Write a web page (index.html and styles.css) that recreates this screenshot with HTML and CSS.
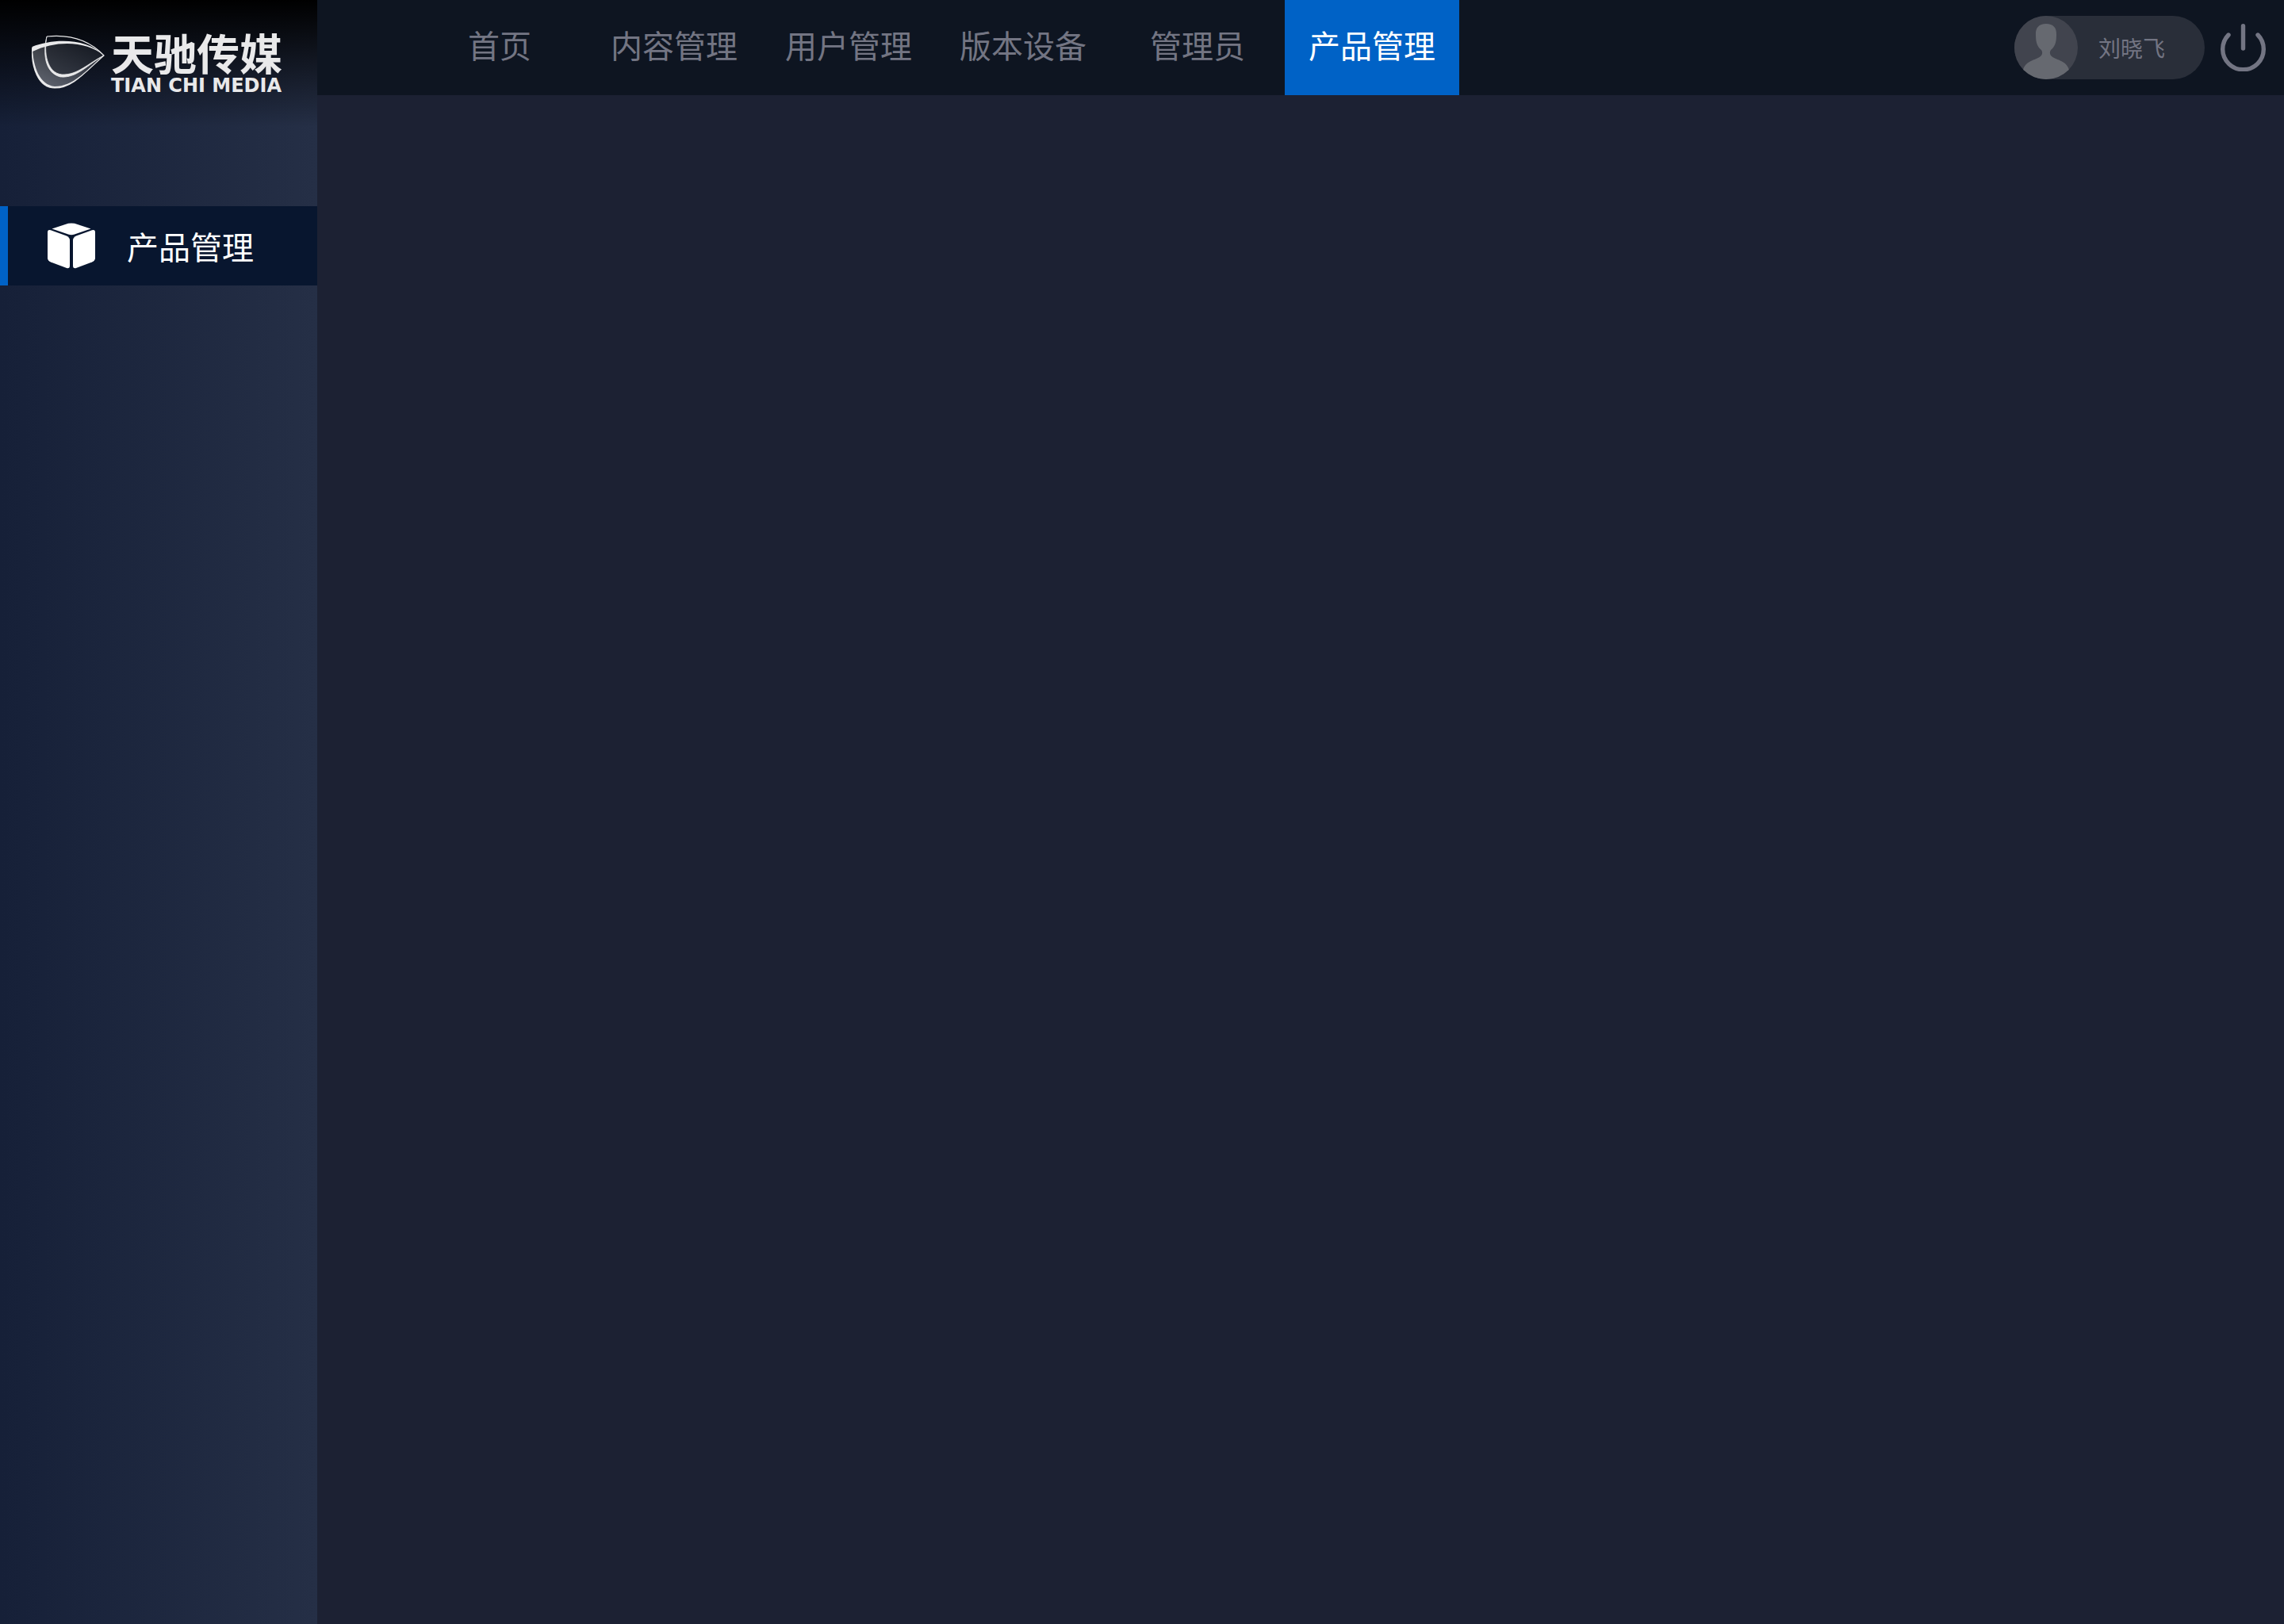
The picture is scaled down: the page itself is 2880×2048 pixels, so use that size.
FILE: index.html
```html
<!DOCTYPE html>
<html lang="zh-CN">
<head>
<meta charset="utf-8">
<meta name="viewport" content="width=device-width, initial-scale=1">
<title>产品管理</title>
<link rel="stylesheet" href="styles.css">
</head>
<body>
<div class="app">
  <aside class="sidebar">
    <div class="brand">
      <svg class="brand-mark" viewBox="0 0 92 70" aria-hidden="true">
        <defs>
          <linearGradient id="glass" x1="0" y1="1" x2="1" y2="0">
            <stop offset="0" stop-color="#fff" stop-opacity=".36"/>
            <stop offset="1" stop-color="#fff" stop-opacity=".04"/>
          </linearGradient>
        </defs>
        <path d="M.8 16C28 4 70 5 91 26C68 46 52 67 29 67C8 67-1 40 .8 16Z" fill="url(#glass)"/>
        <path d="M19 2C48-1 73 7 91 26C72 35 58 54 38 54C16 52 14 22 19 2Z" fill="#10151f" fill-opacity=".4"/>
        <path d="M19 2C48-1 73 7 91 26C68 46 52 67 29 67C8 67-1 40 .8 16" fill="none" stroke="#e9e9ea" stroke-width="1.2"/>
        <path d="M.5 15C28 4 70 4 91 26C70 8 32 6 1 21Z" fill="#e9e9ea"/>
        <path d="M19 2C14 22 16 48 36 53C57 55 71 37 91 26C72 35 58 51 38 50C19 48 15 22 19 2Z" fill="#e9e9ea" stroke="#e9e9ea" stroke-width=".8"/>
        <path d="M29 67C8 67-1 40 .8 16C2 41 10 63 29 65C52 65 68 46 91 26C68 46 52 67 29 67Z" fill="#e9e9ea"/>
      </svg>
      <div class="brand-text">
        <span class="brand-cn">天驰传媒</span>
        <span class="brand-en">TIAN CHI MEDIA</span>
      </div>
    </div>
    <nav class="side-nav">
      <a class="side-link" href="#" aria-current="page">
        <svg class="side-icon" viewBox="0 0 60 58" fill="#fff" aria-hidden="true">
          <path d="M5.500 7.500L26 .8Q30 0 34 .8L54.500 7.500L34 14.600Q30 15.800 26 14.600Z"/>
          <path d="M4 9.300L24 16.500Q28 18.500 28 22V54Q28 58 24 57L4 49.500Q0 47.500 0 44.500V12Q0 8 4 9.300Z"/>
          <path d="M56 9.300L36 16.500Q32 18.500 32 22V54Q32 58 36 57L56 49.500Q60 47.500 60 44.500V12Q60 8 56 9.300Z"/>
        </svg>
        <span>产品管理</span>
      </a>
    </nav>
  </aside>
  <div class="main">
    <header class="topbar">
      <nav class="top-nav">
        <a class="top-link" href="#">首页</a>
        <a class="top-link" href="#">内容管理</a>
        <a class="top-link" href="#">用户管理</a>
        <a class="top-link" href="#">版本设备</a>
        <a class="top-link" href="#">管理员</a>
        <a class="top-link active" href="#" aria-current="page">产品管理</a>
      </nav>
      <div class="account">
        <button class="user" type="button">
          <svg class="avatar" viewBox="0 0 80 80" aria-hidden="true">
            <defs><clipPath id="round"><circle cx="40" cy="40" r="40"/></clipPath></defs>
            <circle cx="40" cy="40" r="40" fill="#41444e"/>
            <path clip-path="url(#round)" fill="#666970" d="M40 10C49 10 53.500 15 53 24C53 34 51 39 46 43C44.500 45 44.500 48 46 50C51 56 65 55 69 68V80H11V68C15 55 29 56 34 50C35.500 48 35.500 45 34 43C29 39 27 34 27 24C26.500 15 31 10 40 10Z"/>
          </svg>
          <span>刘晓飞</span>
        </button>
        <button class="power" type="button" aria-label="退出">
          <svg class="power-icon" viewBox="0 0 58 60" fill="none" stroke="#737583" stroke-width="5.400" stroke-linecap="round" aria-hidden="true">
            <path d="M28.500 2.700V31M10 14A25.800 25.800 0 1 0 47 14"/>
          </svg>
        </button>
      </div>
    </header>
    <main class="content"></main>
  </div>
</div>
</body>
</html>
```
FILE: styles.css
```css
* {
  box-sizing: border-box;
}

body {
  margin: 0;
  background: #1c2133;
  color: #737583;
  font-family: "Noto Sans CJK SC", sans-serif;
  font-size: 40px;
  font-weight: 400;
}

a {
  color: inherit;
  text-decoration: none;
}

button {
  border: 0;
  padding: 0;
  background: none;
  color: inherit;
  font: inherit;
  cursor: pointer;
}

svg {
  display: block;
}

.app {
  display: flex;
  min-height: 100vh;
}

.sidebar {
  flex: 0 0 400px;
  background: linear-gradient(90deg, #162038, #252f46);
}

.brand {
  display: flex;
  gap: 8px;
  height: 160px;
  padding: 44px 32px 0 40px;
  background: linear-gradient(#000, rgba(0, 0, 0, 0));
}

.brand-mark {
  width: 92px;
  height: 70px;
}

.brand-text {
  display: flex;
  flex-direction: column;
  color: #e9e9ea;
  white-space: nowrap;
}

.brand-cn {
  font-size: 54px;
  font-weight: 700;
  line-height: 44px;
}

.brand-en {
  padding-top: 8px;
  font-family: "DejaVu Sans", sans-serif;
  font-size: 24px;
  font-weight: 700;
  line-height: 24px;
}

.side-nav {
  padding-top: 100px;
}

.side-link {
  display: flex;
  align-items: center;
  gap: 40px;
  height: 100px;
  padding-left: 50px;
  border-left: 10px solid #0062c6;
  background: #08162f;
  color: #fff;
}

.side-icon {
  width: 60px;
  height: 58px;
}

.main {
  display: flex;
  flex: 1;
  flex-direction: column;
}

.topbar {
  display: flex;
  justify-content: space-between;
  height: 120px;
  padding: 0 22px 0 120px;
  background: #0e1521;
}

.top-nav {
  display: flex;
}

.top-link {
  width: 220px;
  line-height: 112px;
  text-align: center;
}

.top-link.active {
  background: #0062c6;
  color: #fff;
}

.account {
  display: flex;
  align-items: center;
  gap: 20px;
}

.user {
  display: flex;
  align-items: center;
  gap: 26px;
  width: 240px;
  border-radius: 40px;
  background: #292e39;
  font-size: 28px;
}

.avatar {
  width: 80px;
  height: 80px;
}

.power-icon {
  width: 58px;
  height: 60px;
}

.content {
  flex: 1;
}
```
